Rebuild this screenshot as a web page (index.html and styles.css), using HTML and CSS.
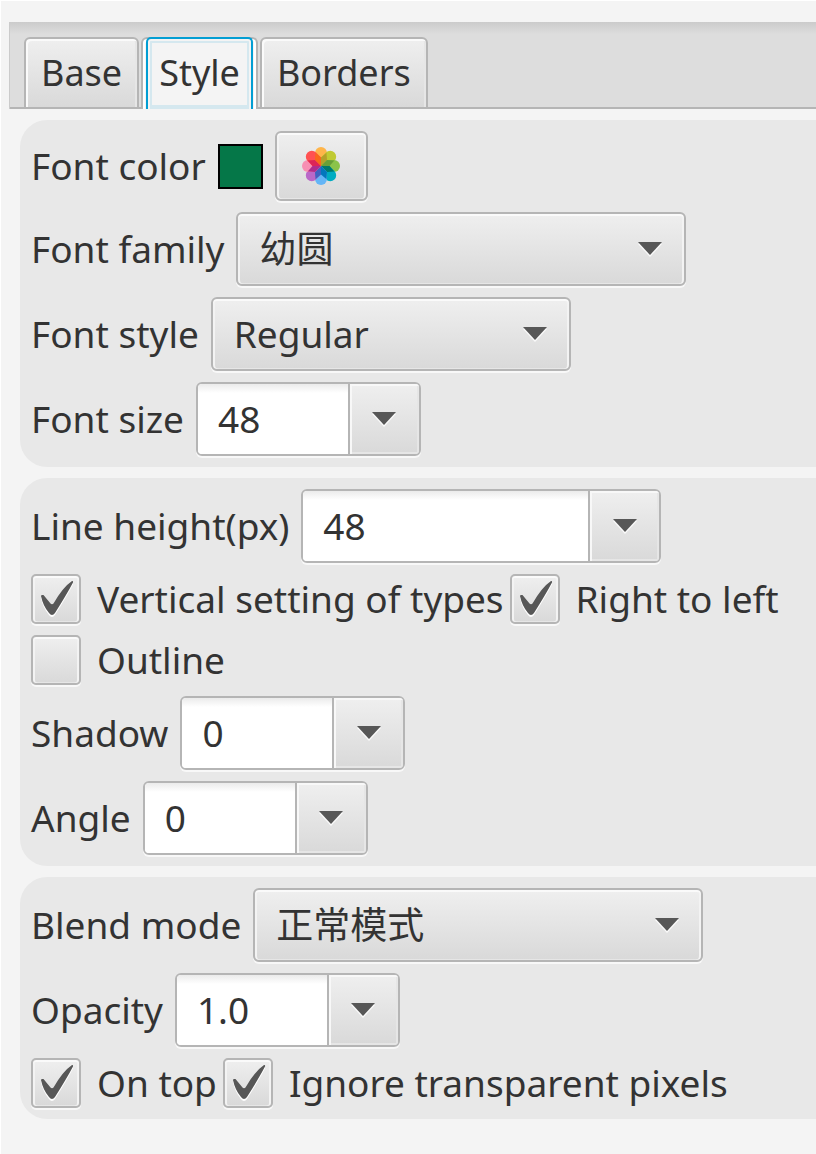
FILE: index.html
```html
<!DOCTYPE html>
<html lang="en">
<head>
<meta charset="utf-8">
<title>Style</title>
<link rel="stylesheet" href="styles.css">
</head>
<body>
<svg class="defs" aria-hidden="true">
  <symbol id="arrow" viewBox="0 0 24 15">
    <path d="M0 2H24L12 15Z" fill="#fafafa"/>
    <path d="M0 0H24L12 13Z" fill="#575757"/>
  </symbol>
  <symbol id="check" viewBox="0 0 50 50">
    <path transform="translate(0 2)" fill="#fff" d="M10 22Q10 20.500 12.500 21L19.500 29.500Q21 31 22.500 29.500Q32 13 41 7Q42.500 6.500 42 8.500Q36 20 24 39Q21 43 18 39Q12 32 10 22Z"/>
    <path fill="#575757" d="M10 22Q10 20.500 12.500 21L19.500 29.500Q21 31 22.500 29.500Q32 13 41 7Q42.500 6.500 42 8.500Q36 20 24 39Q21 43 18 39Q12 32 10 22Z"/>
  </symbol>
</svg>
<main class="pane">
  <div class="tabs" role="tablist">
    <button class="tab" type="button" role="tab">Base</button>
    <button class="tab selected" type="button" role="tab" aria-selected="true"><span class="focus">Style</span></button>
    <button class="tab" type="button" role="tab">Borders</button>
  </div>
  <div class="groups">
    <section class="group">
      <div class="row">
        <span>Font color</span>
        <span class="swatch"></span>
        <button class="palette" type="button" aria-label="Choose color">
          <svg class="flower" viewBox="-20 -20 40 40">
            <rect x="-6" y="-19" width="12" height="19" rx="6" fill="#ffb54a"/>
            <rect x="-6" y="-19" width="12" height="19" rx="6" fill="#c0ca33" transform="rotate(45)"/>
            <rect x="-6" y="-19" width="12" height="19" rx="6" fill="#8bc34a" transform="rotate(90)"/>
            <rect x="-6" y="-19" width="12" height="19" rx="6" fill="#00acc1" transform="rotate(135)"/>
            <rect x="-6" y="-19" width="12" height="19" rx="6" fill="#64b5f6" transform="rotate(180)"/>
            <rect x="-6" y="-19" width="12" height="19" rx="6" fill="#ba68c8" transform="rotate(225)"/>
            <rect x="-6" y="-19" width="12" height="19" rx="6" fill="#f78fb3" transform="rotate(270)"/>
            <rect x="-6" y="-19" width="12" height="19" rx="6" fill="#ff5252" transform="rotate(315)"/>
            <path d="M0 0V-8.500L5.500 -13.300L6 -6Z" fill="#b5a02a"/>
            <path d="M0 0V-8.500L5.500 -13.300L6 -6Z" fill="#689f38" transform="rotate(45)"/>
            <path d="M0 0V-8.500L5.500 -13.300L6 -6Z" fill="#00796b" transform="rotate(90)"/>
            <path d="M0 0V-8.500L5.500 -13.300L6 -6Z" fill="#0277bd" transform="rotate(135)"/>
            <path d="M0 0V-8.500L5.500 -13.300L6 -6Z" fill="#3f62c0" transform="rotate(180)"/>
            <path d="M0 0V-8.500L5.500 -13.300L6 -6Z" fill="#b02b8c" transform="rotate(225)"/>
            <path d="M0 0V-8.500L5.500 -13.300L6 -6Z" fill="#dd2457" transform="rotate(270)"/>
            <path d="M0 0V-8.500L5.500 -13.300L6 -6Z" fill="#f8691a" transform="rotate(315)"/>
          </svg>
        </button>
      </div>
      <div class="row">
        <label for="family">Font family</label>
        <div class="choice large"><select id="family"><option>幼圆</option></select><svg class="arrow"><use href="#arrow"/></svg></div>
      </div>
      <div class="row">
        <label for="fstyle">Font style</label>
        <div class="choice medium"><select id="fstyle"><option>Regular</option></select><svg class="arrow"><use href="#arrow"/></svg></div>
      </div>
      <div class="row">
        <label for="size">Font size</label>
        <div class="combo small"><input id="size" type="text" value="48"><button type="button" aria-label="Font size list"><svg class="arrow"><use href="#arrow"/></svg></button></div>
      </div>
    </section>
    <section class="group">
      <div class="row">
        <label for="line">Line height(px)</label>
        <div class="combo medium"><input id="line" type="text" value="48"><button type="button" aria-label="Line height list"><svg class="arrow"><use href="#arrow"/></svg></button></div>
      </div>
      <div class="row checks">
        <label class="check"><span class="box"><input type="checkbox" checked><svg class="mark"><use href="#check"/></svg></span>Vertical setting of types</label>
        <label class="check"><span class="box"><input type="checkbox" checked><svg class="mark"><use href="#check"/></svg></span>Right to left</label>
      </div>
      <div class="row checks">
        <label class="check"><span class="box"><input type="checkbox"><svg class="mark"><use href="#check"/></svg></span>Outline</label>
      </div>
      <div class="row">
        <label for="shadow">Shadow</label>
        <div class="combo small"><input id="shadow" type="text" value="0"><button type="button" aria-label="Shadow list"><svg class="arrow"><use href="#arrow"/></svg></button></div>
      </div>
      <div class="row">
        <label for="angle">Angle</label>
        <div class="combo small"><input id="angle" type="text" value="0"><button type="button" aria-label="Angle list"><svg class="arrow"><use href="#arrow"/></svg></button></div>
      </div>
    </section>
    <section class="group">
      <div class="row">
        <label for="blend">Blend mode</label>
        <div class="choice large"><select id="blend"><option>正常模式</option></select><svg class="arrow"><use href="#arrow"/></svg></div>
      </div>
      <div class="row">
        <label for="opacity">Opacity</label>
        <div class="combo small"><input id="opacity" type="text" value="1.0"><button type="button" aria-label="Opacity list"><svg class="arrow"><use href="#arrow"/></svg></button></div>
      </div>
      <div class="row checks">
        <label class="check"><span class="box"><input type="checkbox" checked><svg class="mark"><use href="#check"/></svg></span>On top</label>
        <label class="check"><span class="box"><input type="checkbox" checked><svg class="mark"><use href="#check"/></svg></span>Ignore transparent pixels</label>
      </div>
    </section>
  </div>
</main>
</body>
</html>
```
FILE: styles.css
```css
* {
  box-sizing: border-box;
}

body {
  margin: 0;
  min-height: 100vh;
  background: #f4f4f4;
  border-top: 1px solid #fff;
  border-left: 1px solid #fff;
  color: #333;
  font: 37px/48px "Noto Sans", "Noto Sans CJK SC", sans-serif;
}

button,
input,
select {
  margin: 0;
  color: inherit;
  font: inherit;
}

.defs {
  display: none;
}

.pane {
  padding: 21px 0 35px 8px;
}

.tabs {
  display: flex;
  gap: 2px;
  height: 87px;
  padding: 15px 14px 0;
  background: linear-gradient(#cbcbcb, #dddddd 12px);
  border-left: 1px solid #cbcbcb;
  box-shadow: inset 0 -2px #b5b5b5;
  font-size: 36px;
}

.tab {
  height: 72px;
  padding: 0 15px;
  white-space: nowrap;
  border: 2px solid #b5b5b5;
  border-radius: 6px 6px 0 0;
  background: linear-gradient(#efefef, #d9d9d9);
  box-shadow: inset 2px 2px #fafafa, inset -2px 0 #e6e6e6;
}

.tab.selected {
  padding: 0 3px;
  border-bottom: 0;
  background: #f4f4f4;
  box-shadow: inset 2px 2px #fff, inset -2px 0 #fff;
}

.focus {
  display: flex;
  align-items: center;
  height: 72px;
  margin-top: -2px;
  padding: 0 11px 2px;
  border: 2px solid #039ed3;
  border-bottom: 0;
  border-radius: 5px 5px 0 0;
  box-shadow: inset 0 2px #f4f4f4, inset 2px 0 #f4f4f4, inset -2px 0 #f4f4f4, inset 0 0 0 4px #d5e8ef;
}

.groups {
  display: grid;
  gap: 11px;
  padding: 11px 0 0 11px;
}

.group {
  display: grid;
  gap: 11px;
  padding: 11px 0 11px 11px;
  border-radius: 27px 0 0 27px;
  background: #e8e8e8;
}

.row {
  display: flex;
  align-items: center;
  gap: 12px;
  white-space: nowrap;
}

.checks {
  gap: 6px;
}

.swatch {
  width: 45px;
  height: 45px;
  border: 2px solid #000;
  background: #057748;
}

.palette,
.choice select,
.box input {
  border: 2px solid #b5b5b5;
  border-radius: 6px;
  background: linear-gradient(#efefef, #d9d9d9);
  box-shadow: inset 0 2px #fafafa, inset 2px 0 #f3f3f3, inset -2px 0 #f3f3f3, inset 0 -1px #e6e6e6, 0 2px #f8f8f8;
}

.palette {
  display: grid;
  place-items: center;
  width: 93px;
  height: 70px;
  padding: 0;
}

.flower {
  width: 40px;
  height: 40px;
}

.small {
  width: 225px;
}

.medium {
  width: 360px;
}

.large {
  width: 450px;
}

.choice,
.box {
  display: grid;
}

.choice > *,
.box > * {
  grid-area: 1 / 1;
}

.choice select {
  appearance: none;
  width: 100%;
  height: 74px;
  padding: 0 60px 0 21px;
}

.arrow {
  align-self: center;
  justify-self: end;
  width: 24px;
  height: 15px;
  pointer-events: none;
}

.choice .arrow {
  margin-right: 24px;
}

.combo {
  display: flex;
  height: 74px;
  overflow: hidden;
  border: 2px solid #b5b5b5;
  border-radius: 6px;
  background: #fff;
  box-shadow: 0 2px #f8f8f8;
}

.combo input {
  flex: 1;
  min-width: 0;
  padding: 0 20px;
  border: 0;
  background: linear-gradient(#ebebeb, #fff 9px);
}

.combo button {
  display: grid;
  place-items: center;
  width: 71px;
  padding: 0;
  border: 0;
  border-left: 2px solid #b5b5b5;
  background: linear-gradient(#efefef, #d9d9d9);
  box-shadow: inset 2px 2px #f8f8f8, inset -2px -2px #e6e6e6;
}

.combo .arrow {
  justify-self: center;
}

.check {
  display: flex;
  align-items: center;
  gap: 16px;
}

.box input {
  appearance: none;
  width: 50px;
  height: 50px;
  border-radius: 5px;
}

.mark {
  width: 50px;
  height: 50px;
  pointer-events: none;
}

.box input:not(:checked) + .mark {
  visibility: hidden;
}
```
